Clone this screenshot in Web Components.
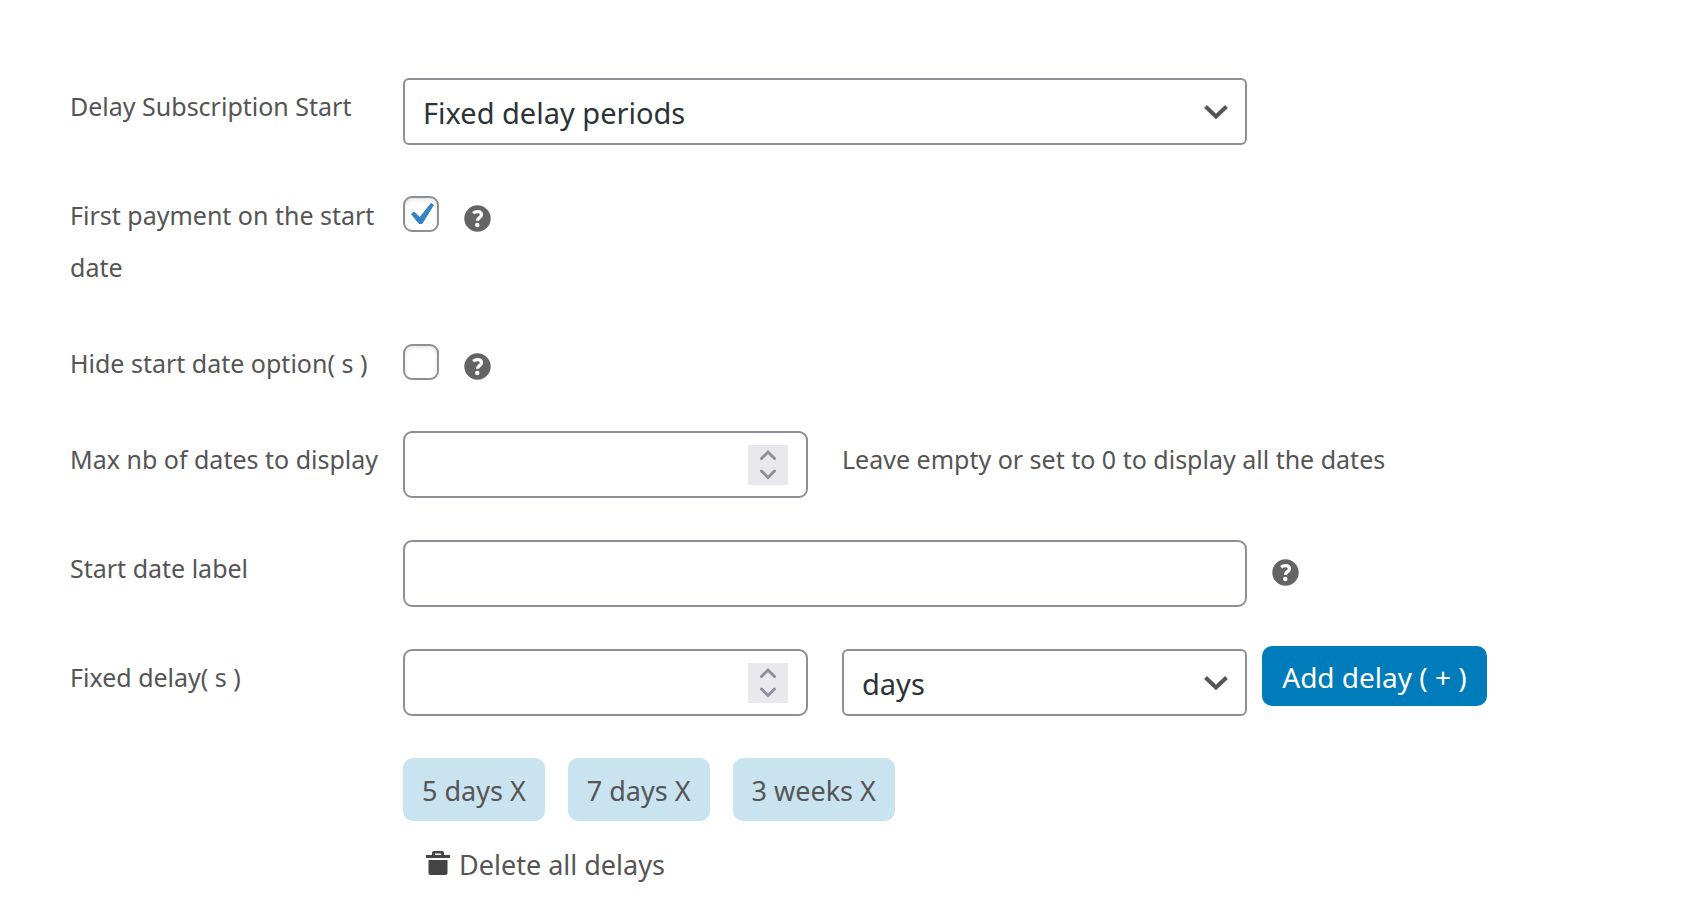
<!DOCTYPE html>
<html lang="en">
<head>
<meta charset="utf-8">
<meta name="viewport" content="width=device-width, initial-scale=1">
<title>Subscription start settings</title>
<style>
  body { margin: 0; background: #fff; font-family: "Segoe UI", "Noto Sans", sans-serif; color: #555; }
</style>
</head>
<body>
<delay-settings></delay-settings>

<template id="field-row">
  <style>
    :host { display: grid; grid-template-columns: 333px minmax(0, 844px) minmax(240px, 1fr); align-items: start; }
    :host([wide]) .body { grid-column: 2 / 4; }
    .body { min-width: 0; }
    .aside { display: flex; align-items: center; height: 53px; }
    :host([wide]) .aside { display: none; }
  </style>
  <slot name="label"></slot>
  <div class="body"><slot></slot></div>
  <div class="aside"><slot name="aside"></slot></div>
</template>

<template id="help-tip">
  <style>
    :host { display: block; flex: none; width: 27px; height: 27px; color: #646464; }
    svg { display: block; }
  </style>
  <svg width="27" height="27" viewBox="0 0 27 27" role="img" aria-label="Help">
    <circle cx="13.500" cy="13.500" r="13.200" fill="currentColor"/>
    <path d="M9.200 8.200c1.200-1 2.600-1.500 4.200-1.500 2.500 0 4.100 1.100 4.100 3.100 0 3-4.100 2.700-4.100 5.900" fill="none" stroke="#fff" stroke-width="3.300"/>
    <circle cx="13.300" cy="20" r="2.200" fill="#fff"/>
  </svg>
</template>

<template id="number-box">
  <style>
    :host { display: flex; align-items: center; box-sizing: border-box; height: 67px; padding: 0 18px; border: 2px solid #8c8f94; border-radius: 9px; background: #fff; }
    ::slotted(input) { flex: 1; min-width: 0; }
    .steps { flex: none; display: flex; flex-direction: column; width: 40px; height: 40px; background: #e9e9ed; }
    button { flex: 1; display: grid; place-items: center; padding: 0; border: 0; background: none; color: #8f8f9d; }
    svg { display: block; }
  </style>
  <slot></slot>
  <div class="steps">
    <button type="button" aria-label="Increase"><svg width="18" height="12" viewBox="0 0 18 12"><path d="M2.500 9.500 9 3 15.500 9.500" fill="none" stroke="currentColor" stroke-width="3" stroke-linecap="round"/></svg></button>
    <button type="button" aria-label="Decrease"><svg width="18" height="12" viewBox="0 0 18 12"><path d="M2.500 2 9 8.500 15.500 2" fill="none" stroke="currentColor" stroke-width="3" stroke-linecap="round"/></svg></button>
  </div>
</template>

<template id="delay-chip">
  <style>
    :host { display: block; }
    button { display: block; height: 63px; padding: 2px 19px 0; border: 0; border-radius: 10px; background: #c9e3f0; color: #555; font: inherit; white-space: nowrap; }
  </style>
  <button type="button"><slot></slot> X</button>
</template>

<template id="delay-settings">
  <style>
    :host { display: block; padding: 78px 70px 26px; font-size: 25px; line-height: 52px; }
    form { display: flex; flex-direction: column; gap: 42px; }
    label, #hint { padding-top: 2px; }
    input, select { box-sizing: border-box; font: inherit; color: #2c3338; }
    .text, select { display: block; width: 100%; height: 67px; padding: 2px 18px 0; border: 2px solid #8c8f94; background-color: #fff; font-size: 29px; line-height: 40px; }
    .text { border-radius: 9px; }
    select { border-radius: 6px; appearance: none; background-image: url("data:image/svg+xml,%3Csvg xmlns='http://www.w3.org/2000/svg' width='24' height='16' viewBox='0 0 24 16'%3E%3Cpath d='M1.500 2.500 12 12.500 22.500 2.500' fill='none' stroke='%23555' stroke-width='4'/%3E%3C/svg%3E"); background-repeat: no-repeat; background-position: right 17px center; }
    number-box input { width: 100%; padding: 0; border: 0; outline: 0; background: none; font-size: 29px; appearance: textfield; }
    input::-webkit-inner-spin-button { appearance: none; }
    .tick { display: flex; align-items: center; gap: 25px; height: 53px; }
    .tick help-tip { margin-top: 10px; }
    input[type=checkbox] { appearance: none; flex: none; width: 36px; height: 36px; margin: 0; border: 2px solid #8c8f94; border-radius: 9px; background: #fff; box-shadow: inset 0 2px 4px rgba(0, 0, 0, .1); }
    input[type=checkbox]:checked { background: url("data:image/svg+xml,%3Csvg xmlns='http://www.w3.org/2000/svg' width='32' height='32' viewBox='0 0 32 32'%3E%3Cpath d='M6.500 16 L9 14 L15 19.500 L26 5.500 L28.500 7 L17 25.500 L14 25.500 Z' fill='%233582c4' stroke='%233582c4' stroke-linejoin='round'/%3E%3C/svg%3E") center no-repeat; }
    .pair { display: grid; grid-template-columns: minmax(0, 405px) minmax(0, 405px); gap: 34px; }
    .open { grid-template-columns: minmax(0, 405px) minmax(0, 1fr); }
    help-tip[slot] { margin: 12px 0 0 25px; }
    .add { height: 60px; margin-left: 15px; padding: 3px 18px 0; min-width: 225px; border: 0; border-radius: 10px; background: #007cba; color: #fff; font: inherit; font-size: 28px; white-space: nowrap; }
    .chips { display: flex; flex-wrap: wrap; gap: 23px; font-size: 27px; }
    .clear { display: inline-flex; align-items: center; gap: 9px; margin: 18px 0 0 23px; color: inherit; font-size: 27px; text-decoration: none; }
    .clear svg { margin-bottom: 4px; }
  </style>
  <form>
    <field-row>
      <label slot="label" for="mode">Delay Subscription Start</label>
      <select id="mode"><option>Fixed delay periods</option></select>
    </field-row>
    <field-row>
      <label slot="label" for="first">First payment on the start date</label>
      <div class="tick"><input id="first" type="checkbox" checked><help-tip></help-tip></div>
    </field-row>
    <field-row>
      <label slot="label" for="hide">Hide start date option( s )</label>
      <div class="tick"><input id="hide" type="checkbox"><help-tip></help-tip></div>
    </field-row>
    <field-row wide>
      <label slot="label" for="max">Max nb of dates to display</label>
      <div class="pair open"><number-box><input id="max" type="number" min="0" aria-describedby="hint"></number-box><span id="hint">Leave empty or set to 0 to display all the dates</span></div>
    </field-row>
    <field-row>
      <label slot="label" for="caption">Start date label</label>
      <input id="caption" class="text" type="text">
      <help-tip slot="aside"></help-tip>
    </field-row>
    <field-row>
      <label slot="label" for="delay">Fixed delay( s )</label>
      <div class="pair"><number-box><input id="delay" type="number" min="0"></number-box><select aria-label="Delay unit"><option>days</option><option>weeks</option></select></div>
      <button slot="aside" class="add" type="button">Add delay ( + )</button>
    </field-row>
    <field-row wide>
      <span slot="label"></span>
      <div class="chips"><delay-chip>5 days</delay-chip><delay-chip>7 days</delay-chip><delay-chip>3 weeks</delay-chip></div>
      <a class="clear" href="#"><svg width="24" height="24" viewBox="0 0 24 24" fill="#444" aria-hidden="true"><path d="M0 4h6V2q0-2 2-2h8q2 0 2 2v2h6v3H0zM9 2.500V4h6V2.500z" fill-rule="evenodd"/><path d="M2.500 9h19v13q0 2-2 2h-15q-2 0-2-2z"/></svg>Delete all delays</a>
    </field-row>
  </form>
</template>

<script>
  for (const name of ["field-row", "help-tip", "number-box", "delay-chip", "delay-settings"]) {
    customElements.define(name, class extends HTMLElement {
      constructor() {
        super();
        this.attachShadow({ mode: "open" }).append(document.getElementById(name).content.cloneNode(true));
      }
      connectedCallback() {
        if (name !== "number-box") return;
        const [up, down] = this.shadowRoot.querySelectorAll("button");
        up.onclick = () => this.querySelector("input").stepUp();
        down.onclick = () => this.querySelector("input").stepDown();
      }
    });
  }
</script>
</body>
</html>
